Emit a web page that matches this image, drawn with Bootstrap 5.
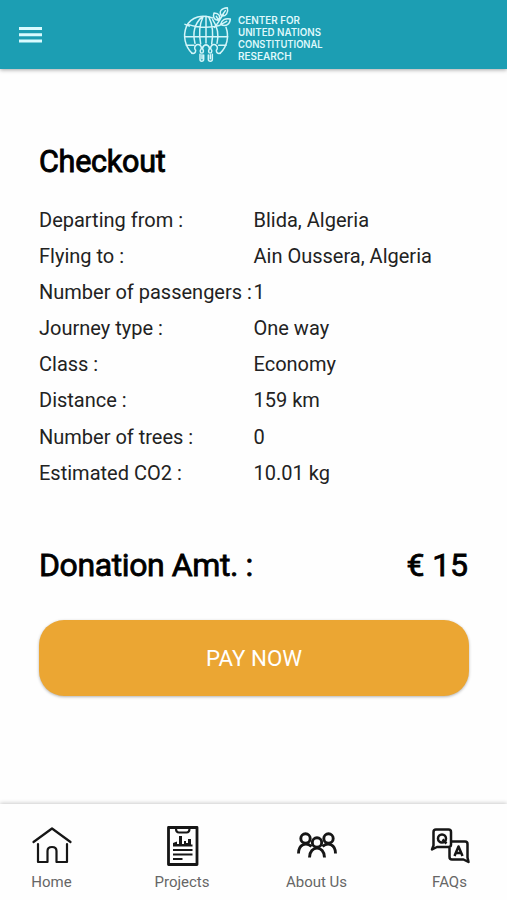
<!DOCTYPE html>
<html lang="en">
<head>
<meta charset="utf-8">
<meta name="viewport" content="width=device-width, initial-scale=1">
<title>Checkout</title>
<link href="https://cdn.jsdelivr.net/npm/bootstrap@5.3.0/dist/css/bootstrap.min.css" rel="stylesheet">
<style>
body{font-family:Roboto,"Liberation Sans",sans-serif;background:#fefefe;color:#222;overflow:hidden}
.top-bar{height:69px;background:#1c9eb3;box-shadow:0 1px 4px rgba(0,0,0,.35)}
.menu-side{width:170px;padding-left:18px}
.brand-logo{width:170px;height:69px;display:block}
.brand-logo text{font-family:Inter,sans-serif;font-weight:600;font-size:30px;fill:#dff8fb}
.checkout{padding:0 38px 0 39px}
.heading{font-size:30.5px;line-height:36px;color:#000;-webkit-text-stroke:.9px #000;margin-top:75px;letter-spacing:-.25px}
.details{margin-top:22px;font-size:20px}
.detail-row{height:36.1px;line-height:36px;white-space:nowrap}
.detail-row dt{width:214.5px;font-weight:400}
.total{margin-top:54px;font-size:32px;line-height:40px;color:#000;-webkit-text-stroke:.8px #000;letter-spacing:-.4px}
.total .amount{letter-spacing:-.1px;padding-right:1px}
.pay{height:76px;margin-top:35px;padding-top:8px;border-radius:25px;background:#eba633;color:#fff;font-size:22.3px;box-shadow:0 1px 3px rgba(0,0,0,.3)}
.pay:hover{background:#df9926;color:#fff}
.tabs{height:96px;background:#fefefe;box-shadow:0 -1px 4px rgba(0,0,0,.2);font-size:15px}
.tab-link{color:#666;line-height:18px;padding-top:16px;width:103px}
.tab-projects{width:158px}
.tab-about{width:111px}
.tab-faqs{margin-left:26px}
.tab-link svg{width:44px;height:44px;margin-bottom:9px;fill:none;stroke:#161616;overflow:visible}
</style>
<script src="https://cdn.jsdelivr.net/npm/bootstrap@5.3.0/dist/js/bootstrap.bundle.min.js"></script>
</head>
<body class="vh-100 d-flex flex-column">
<header class="top-bar d-flex align-items-center flex-shrink-0">
  <div class="menu-side">
    <button class="btn p-0 border-0 d-block" aria-label="Menu"><svg class="d-block" width="24" height="18" viewBox="0 0 24 18" fill="#d9fbff"><path d="M1 1h23v3H1zM1 7.3h23v3H1zM1 13.6h23v3H1z"/></svg></button>
  </div>
  <svg class="brand-logo" viewBox="0 0 510 207" role="img" aria-label="Center for United Nations Constitutional Research">
    <g fill="none" stroke="#d3f5f9" stroke-width="4.500" stroke-linecap="round" stroke-linejoin="round">
      <path d="M128 54C99 42 63 50 49 80C38 108 45 139 66 160M168 82C178 110 171 141 150 160"/>
      <path d="M108 49v80M97 50C69 75 69 106 75 130M99 51C87 76 87 106 92 132M116 50C129 76 130 106 125 132M128 59C145 84 147 106 141 130M56 74C83 84 127 84 150 76M45 110H173M49 136H72M146 136H168"/>
      <path d="M45 73L58 78"/>
      <path d="M66 160Q77 162 77 151A10 10 0 1 1 91 151V155Q91 159 95 159Q100 159 100 155V151A10 10 0 1 1 116 151V155Q116 159 121 159Q125 159 125 155V151A10 10 0 1 1 139 151Q139 162 150 160"/>
      <path d="M90 163V178Q90 184 95 184Q101 184 101 178V165M115 165V178Q115 184 121 184Q127 184 127 178V163M96 164v12M121 164v12"/>
      <path d="M134 82C147 67 153 53 160 42M146 61C130 61 129 48 132 39C147 40 153 48 146 61ZM155 48C145 35 154 24 172 23C176 38 168 49 155 48ZM152 74C154 59 166 54 181 57C180 73 169 81 152 74ZM152 74L170 64M155 48L166 32M146 61L139 49"/>
    </g>
    <text x="204" y="71" textLength="186" lengthAdjust="spacingAndGlyphs">CENTER FOR</text>
    <text x="204" y="107" textLength="249" lengthAdjust="spacingAndGlyphs">UNITED NATIONS</text>
    <text x="204" y="143" textLength="254" lengthAdjust="spacingAndGlyphs">CONSTITUTIONAL</text>
    <text x="204" y="179" textLength="161" lengthAdjust="spacingAndGlyphs">RESEARCH</text>
  </svg>
</header>
<main class="checkout flex-grow-1">
  <h1 class="heading mb-0 fw-normal">Checkout</h1>
  <dl class="details mb-0">
    <div class="detail-row d-flex"><dt>Departing from :</dt><dd class="mb-0">Blida, Algeria</dd></div>
    <div class="detail-row d-flex"><dt>Flying to :</dt><dd class="mb-0">Ain Oussera, Algeria</dd></div>
    <div class="detail-row d-flex"><dt>Number of passengers :</dt><dd class="mb-0">1</dd></div>
    <div class="detail-row d-flex"><dt>Journey type :</dt><dd class="mb-0">One way</dd></div>
    <div class="detail-row d-flex"><dt>Class :</dt><dd class="mb-0">Economy</dd></div>
    <div class="detail-row d-flex"><dt>Distance :</dt><dd class="mb-0">159 km</dd></div>
    <div class="detail-row d-flex"><dt>Number of trees :</dt><dd class="mb-0">0</dd></div>
    <div class="detail-row d-flex"><dt>Estimated CO2 :</dt><dd class="mb-0">10.01 kg</dd></div>
  </dl>
  <div class="total d-flex justify-content-between"><span>Donation Amt. :</span><span class="amount">€ 15</span></div>
  <button class="pay btn w-100 border-0">PAY NOW</button>
</main>
<nav class="tabs d-flex flex-shrink-0">
  <a href="#" class="tab-link text-decoration-none d-flex flex-column align-items-center">
    <svg viewBox="0 0 44 44" stroke-width="2.200" stroke-linecap="round" stroke-linejoin="round"><path d="M3.500 22L22 8.500 40.500 22M8 24V42H17.500V31Q17.500 27 22 27Q26.500 27 26.500 31V42H37V24"/></svg>
    Home</a>
  <a href="#" class="tab-link tab-projects text-decoration-none d-flex flex-column align-items-center">
    <svg viewBox="0 0 44 44"><path stroke-width="2.800" stroke-linejoin="round" d="M8.500 7.500H37V44.500H8.500Z"/><path stroke-width="2.200" d="M16 8.500Q16 12.500 19 12.500H26.500Q29.500 12.500 29.500 8.500M13 25.500H32.500M13 30H32.500M13 34.500H32.500M13 39H22.500"/><path fill="#161616" stroke="none" d="M13 26V23L17 21.500V24H19V16H22V24H24V21H26V23H28V19H31V26Z"/></svg>
    Projects</a>
  <a href="#" class="tab-link tab-about text-decoration-none d-flex flex-column align-items-center">
    <svg viewBox="0 0.500 44 44" stroke-width="2.900" stroke-linecap="butt"><circle cx="10.500" cy="19" r="4.700"/><circle cx="33.500" cy="19" r="4.700"/><circle cx="22" cy="23" r="4.700"/><path d="M3.500 34C3.500 25 11 22 16.500 27M40.500 34C40.500 25 33 22 27.500 27M14.500 38C14.500 25.500 29.500 25.500 29.500 38"/></svg>
    About Us</a>
  <a href="#" class="tab-link tab-faqs text-decoration-none d-flex flex-column align-items-center">
    <svg viewBox="0 0 44 44" stroke-width="2.500" stroke-linejoin="round"><path d="M20.500 27H9L4 29.500L5.500 25.500V12Q5.500 9.500 8 9.500H20.500Q23 9.500 23 12V24.500Q23 27 20.500 27ZM23 21.500H37Q39.500 21.500 39.500 24V37.500L40.500 42L35.500 39.500H24Q21.500 39.500 21.500 37V27"/><circle cx="14" cy="18.500" r="4"/><path d="M14.500 19.500L18.500 23.500M26.500 36L30.500 26.500L34.500 36M28 33H33"/></svg>
    FAQs</a>
</nav>
</body>
</html>
